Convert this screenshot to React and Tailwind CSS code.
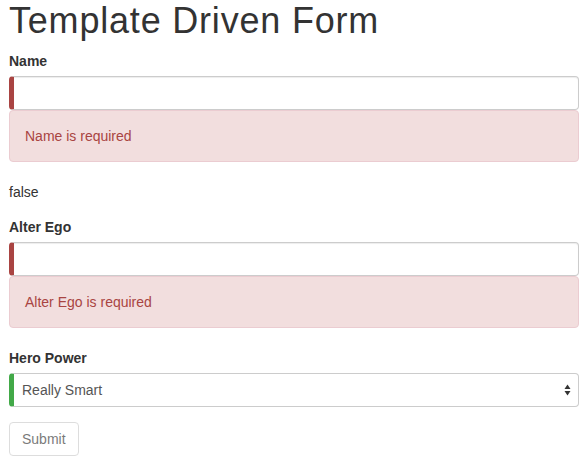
import React from 'react';

const inputCls =
  'block w-full h-[34px] px-3 bg-white border border-[#ccc] border-l-[5px] rounded-[4px] shadow-[inset_0_1px_1px_rgba(0,0,0,0.075)] outline-none';

const Label = ({ children }) => (
  <label className="block mb-[5px] font-bold text-[14px] leading-[20px]">{children}</label>
);

const Alert = ({ children }) => (
  <div className="mb-[20px] p-[15px] leading-[20px] bg-[#f2dede] border border-[#ebccd1] rounded-[4px] text-[#a94442]">
    {children}
  </div>
);

const App = () => {
  return (
    <div
      className="min-h-screen bg-white text-[#333] text-[14px] leading-[20px]"
      style={{ fontFamily: '"Liberation Sans", Arial, sans-serif' }}
    >
      <div className="flex flex-col w-[570px] ml-[9px] pt-[1px]">
        <h1 className="text-[36px] leading-[1.1] font-medium tracking-[0.8px] mb-[10px]">
          Template Driven Form
        </h1>

        <Label>Name</Label>
        <input type="text" className={`${inputCls} border-l-[#a94442]`} />
        <Alert>Name is required</Alert>

        <div className="mb-[15px]">false</div>

        <Label>Alter Ego</Label>
        <input type="text" className={`${inputCls} border-l-[#a94442]`} />
        <Alert>Alter Ego is required</Alert>

        <Label>Hero Power</Label>
        <div className="relative mb-[15px]">
          <select
            defaultValue="Really Smart"
            className="block w-full h-[34px] pl-[8px] pr-8 appearance-none bg-white text-[#555] border border-[#ccc] border-l-[5px] border-l-[#42a948] rounded-[4px] outline-none"
            style={{ fontFamily: '"Liberation Sans", Arial, sans-serif' }}
          >
            <option>Really Smart</option>
            <option>Super Flexible</option>
            <option>Super Hot</option>
            <option>Weather Changer</option>
          </select>
          <svg
            className="absolute right-[8px] top-[11px] pointer-events-none"
            width="7"
            height="12"
            viewBox="0 0 7 12"
          >
            <path d="M3.5 0.5 L6.5 5 L0.5 5 Z" fill="#333" />
            <path d="M3.5 11.5 L6.5 7 L0.5 7 Z" fill="#333" />
          </svg>
        </div>

        <div>
          <button
            type="submit"
            disabled
            className="h-[34px] px-[12px] border border-[#ccc] rounded-[4px] bg-white text-[#333] opacity-[0.65] cursor-not-allowed"
          >
            Submit
          </button>
        </div>
      </div>
    </div>
  );
};

export default App;
